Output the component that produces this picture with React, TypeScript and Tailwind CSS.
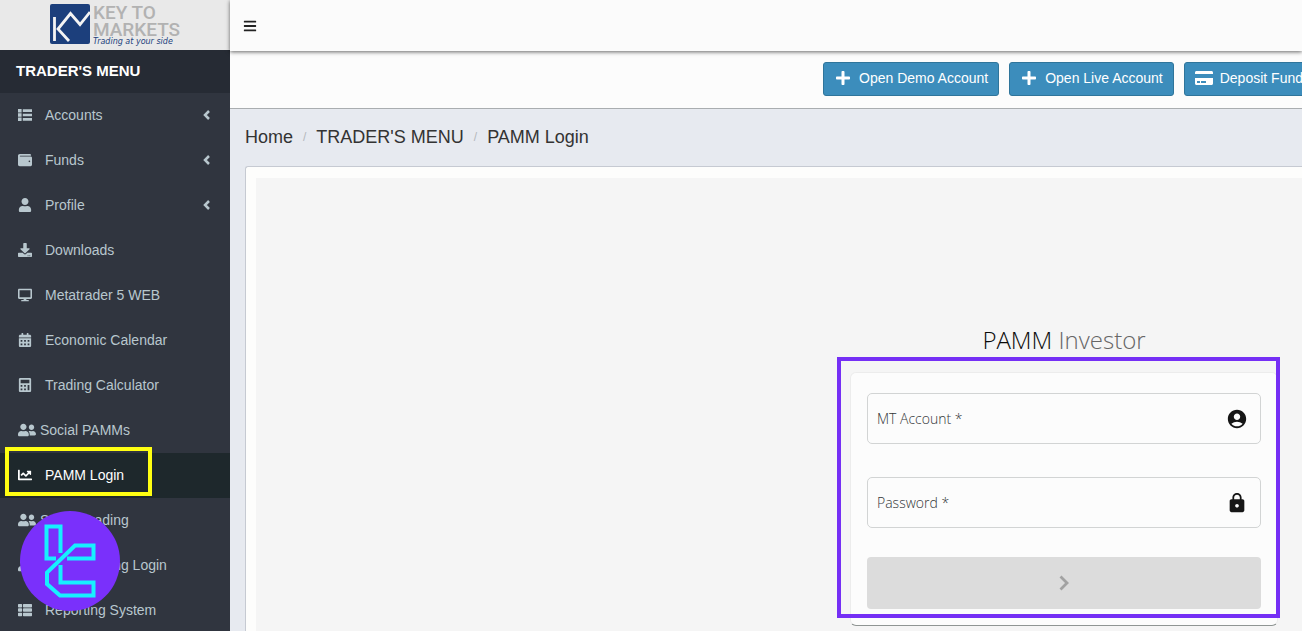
import type { ReactNode } from "react";
import type { IconType } from "react-icons";
import {
  FaBars,
  FaCalculator,
  FaCalendarAlt,
  FaChartLine,
  FaCreditCard,
  FaDesktop,
  FaDownload,
  FaPlus,
  FaThList,
  FaUser,
  FaUserFriends,
  FaWallet,
} from "react-icons/fa";
import { MdAccountCircle, MdLock } from "react-icons/md";

type NavItem = {
  label: string;
  icon: IconType;
  expandable?: boolean;
  active?: boolean;
  wide?: boolean;
};

function ListIcon({ className }: { className?: string }) {
  return (
    <svg viewBox="0 0 14 14" fill="currentColor" className={className}>
      <path d="M0 1h3.600v3.400H0zM0 5.300h3.600v3.400H0zM0 9.600h3.600V13H0zM4.800 1.300H14v2.600H4.800zM4.800 5.700H14v2.600H4.800zM4.800 10.100H14v2.600H4.800z" />
    </svg>
  );
}

const nav: NavItem[] = [
  { label: "Accounts", icon: ListIcon as IconType, expandable: true },
  { label: "Funds", icon: FaWallet, expandable: true },
  { label: "Profile", icon: FaUser, expandable: true },
  { label: "Downloads", icon: FaDownload },
  { label: "Metatrader 5 WEB", icon: FaDesktop },
  { label: "Economic Calendar", icon: FaCalendarAlt },
  { label: "Trading Calculator", icon: FaCalculator },
  { label: "Social PAMMs", icon: FaUserFriends, wide: true },
  { label: "PAMM Login", icon: FaChartLine, active: true },
  { label: "Social Trading", icon: FaUserFriends, wide: true },
  { label: "Social Trading Login", icon: FaUserFriends, wide: true },
  { label: "Reporting System", icon: FaThList },
];

const actions = [
  { label: "Open Demo Account", icon: FaPlus },
  { label: "Open Live Account", icon: FaPlus },
  { label: "Deposit Funds", icon: FaCreditCard },
];

function Brand() {
  return (
    <a href="#" className="flex h-[50px] items-start justify-center gap-[3px] bg-[#e9e9e9] pt-1">
      <svg viewBox="0 0 40 40" className="size-10 shrink-0">
        <rect width="40" height="40" rx="2" fill="#1c3f7c" />
        <path
          d="M4.500 13v24M19 37 8 25 20.500 9.500l9.500 11L40 8"
          fill="none"
          stroke="#f4f4f4"
          strokeWidth="2.800"
        />
      </svg>
      <span className="flex flex-col font-['Roboto',sans-serif]">
        <span className="text-[19px] leading-[17px] font-medium text-[#b2b2b2]">KEY TO</span>
        <span className="text-[19px] leading-[17px] font-medium text-[#b2b2b2]">MARKETS</span>
        <span className="font-['DejaVu_Sans',sans-serif] text-[8px] leading-2 text-[#1c3f7c] italic">
          Trading at your side
        </span>
      </span>
    </a>
  );
}

function SidebarItem({ item }: { item: NavItem }) {
  const Icon = item.icon;
  return (
    <li className="relative">
      <a
        href="#"
        className={`flex h-[45px] items-center pr-5 pb-0.5 pl-[18px] text-sm ${
          item.active ? "bg-[#1e282c] text-white" : "text-[#b8c7ce]"
        }`}
      >
        <span className={item.wide ? "w-[22px] shrink-0" : "w-[27px] shrink-0"}>
          <Icon className={item.wide ? "size-[18px]" : "size-[14px]"} />
        </span>
        <span className="flex-1">{item.label}</span>
        {item.expandable && (
          <svg viewBox="0 0 7 10" className="h-[10px] w-[7px]" fill="none" stroke="currentColor" strokeWidth="2.500">
            <path d="M6 1 2 5l4 4" />
          </svg>
        )}
      </a>
      {item.active && (
        <span className="pointer-events-none absolute -top-1.5 left-[5px] h-[49px] w-[147px] border-4 border-[#ffff12]" />
      )}
    </li>
  );
}

function Watermark() {
  return (
    <svg viewBox="0 0 100 100" className="absolute bottom-5 left-5 size-[100px]">
      <circle cx="50" cy="50" r="50" fill="#7a30fb" />
      <g fill="none" stroke="#16f0ff" strokeWidth="4">
        <path d="M36 47.500h-9.500V15.500h14V42" />
        <path d="M47 47.500h26.500V34.500H55L27 61.500V73L40 84.500h33.500V71.500H40.500V54" />
      </g>
    </svg>
  );
}

function Sidebar() {
  return (
    <aside className="relative w-[230px] shrink-0 overflow-hidden bg-[#30353f]">
      <Brand />
      <h2 className="flex h-[43px] items-center bg-[#262b34] px-4 text-[15px] font-bold text-white">TRADER'S MENU</h2>
      <nav>
        <ul>
          {nav.map((item) => (
            <SidebarItem key={item.label} item={item} />
          ))}
        </ul>
      </nav>
      <Watermark />
    </aside>
  );
}

function Field({ label, type, children }: { label: string; type: string; children: ReactNode }) {
  return (
    <label className="flex h-[51px] items-center rounded-[5px] border border-[#d2d4d4] pr-3 pl-[9px] text-sm text-[#333638]">
      <span>{label}</span>
      <input type={type} className="min-w-0 flex-1 px-2 outline-none" />
      <span className="text-[#161616]">{children}</span>
    </label>
  );
}

function LoginForm() {
  return (
    <div className="w-[428px] font-['Open_Sans',sans-serif] font-light">
      <h1 className="text-center text-2xl leading-8 text-[#666]">
        <span className="text-[#0a0a0a]">PAMM</span> Investor
      </h1>
      <form className="relative mt-4 rounded-md border border-[#ececec] border-b-[#8f9593] bg-[#fcfcfc] px-4 pt-5 pb-4">
        <Field label="MT Account *" type="text">
          <MdAccountCircle className="size-[22px]" />
        </Field>
        <div className="mt-[33px]">
          <Field label="Password *" type="password">
            <MdLock className="size-[22px]" />
          </Field>
        </div>
        <button
          type="submit"
          disabled
          aria-label="Continue"
          className="mt-[29px] flex h-[52px] w-full items-center justify-center rounded bg-[#dcdcdc] text-[#a2a2a2]"
        >
          <svg viewBox="0 0 10 16" className="h-4 w-[10px]" fill="none" stroke="currentColor" strokeWidth="2.800">
            <path d="m1.500 1.500 6.500 6.500-6.500 6.500" />
          </svg>
        </button>
        <span className="pointer-events-none absolute -top-4 -right-[3px] -left-[14px] h-[261px] border-4 border-[#752ff5]" />
      </form>
    </div>
  );
}

export default function App() {
  return (
    <div className="flex h-screen overflow-hidden bg-[#e7eaf0] font-['Liberation_Sans',Arial,sans-serif]">
      <Sidebar />
      <div className="flex min-w-0 flex-1 flex-col">
        <header className="z-10 flex h-[51px] shrink-0 items-center bg-[#fbfbfb] px-[13px] shadow-[0_1px_4px_rgba(0,0,0,0.6)]">
          <button type="button" aria-label="Toggle menu" className="text-[#222]">
            <FaBars className="size-[14px]" />
          </button>
        </header>
        <div className="h-[58px] shrink-0 overflow-hidden border-b border-[#a9adb0] bg-[#fcfcfc] pt-[11px]">
          {/* the row runs past the right edge, so the last button is clipped */}
          <div className="-mr-[19px] flex justify-end gap-[10px]">
            {actions.map(({ label, icon: Icon }) => (
              <button
                key={label}
                type="button"
                className="flex h-[34px] shrink-0 items-center gap-[7px] rounded-[3px] border border-[#2f759b] bg-[#3c8dbc] px-[10px] pb-0.5 text-sm text-white"
              >
                <Icon className="h-4 w-[18px]" />
                {label}
              </button>
            ))}
          </div>
        </div>
        <main className="flex min-h-0 flex-1 flex-col pl-[15px]">
          <nav aria-label="Breadcrumb" className="flex h-[57px] shrink-0 items-center pb-0.5 text-lg text-[#333]">
            <a href="#">Home</a>
            <span className="px-[10px] text-xs text-[#b4b8bc]">/</span>
            <a href="#">TRADER'S MENU</a>
            <span className="px-[10px] text-xs text-[#b4b8bc]">/</span>
            <a href="#">PAMM Login</a>
          </nav>
          <section className="flex-1 rounded-tl-[3px] border-t border-l border-[#c6cad2] bg-[#fdfdfc] pt-[11px] pl-[10px]">
            <div className="flex h-full justify-end bg-[#f5f5f5] pt-[146px] pr-6">
              <LoginForm />
            </div>
          </section>
        </main>
      </div>
    </div>
  );
}
